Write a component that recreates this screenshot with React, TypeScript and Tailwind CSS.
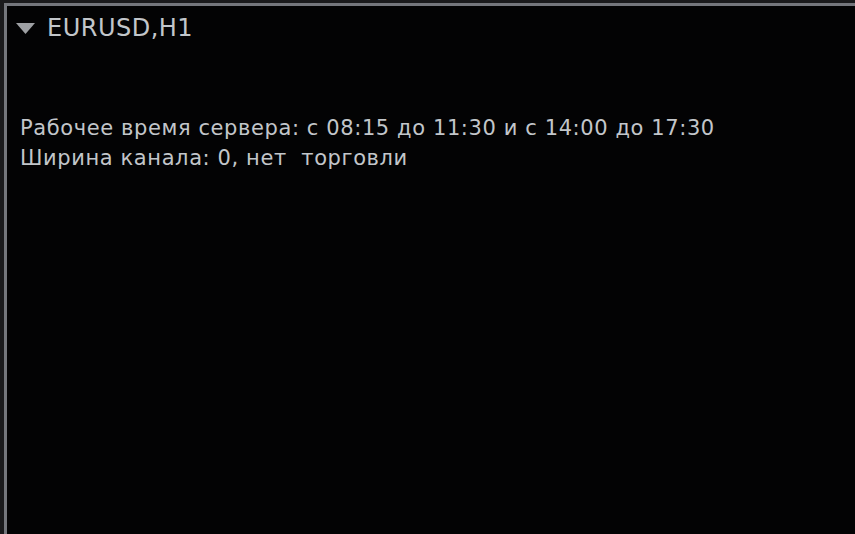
export default function App() {
  return (
    <div className="h-[534px] w-[855px] overflow-hidden bg-[#1a1a1c] pl-1 pt-[3px]">
      <div className="h-full w-full border-l-[3px] border-t-[3px] border-[#74767c] bg-[#030304] font-['DejaVu_Sans',sans-serif] text-[#c2c6ca]">
        <div className="flex items-center gap-[12px] pl-[9px] pt-[7px]">
          <svg width="19" height="11" viewBox="0 0 19 11" className="mt-[1px]">
            <path d="M0 0 H19 L9.5 11 Z" fill="#9ea0a4" />
          </svg>
          <span className="text-[24px] leading-[30px] tracking-[0.5px]">EURUSD,H1</span>
        </div>
        <div className="pl-[13px] pt-[70px] text-[21px] leading-[30px] tracking-[0.6px]">
          <div>Рабочее время сервера: с 08:15 до 11:30 и с 14:00 до 17:30</div>
          <div>Ширина канала: 0, нет&nbsp; торговли</div>
        </div>
      </div>
    </div>
  )
}
